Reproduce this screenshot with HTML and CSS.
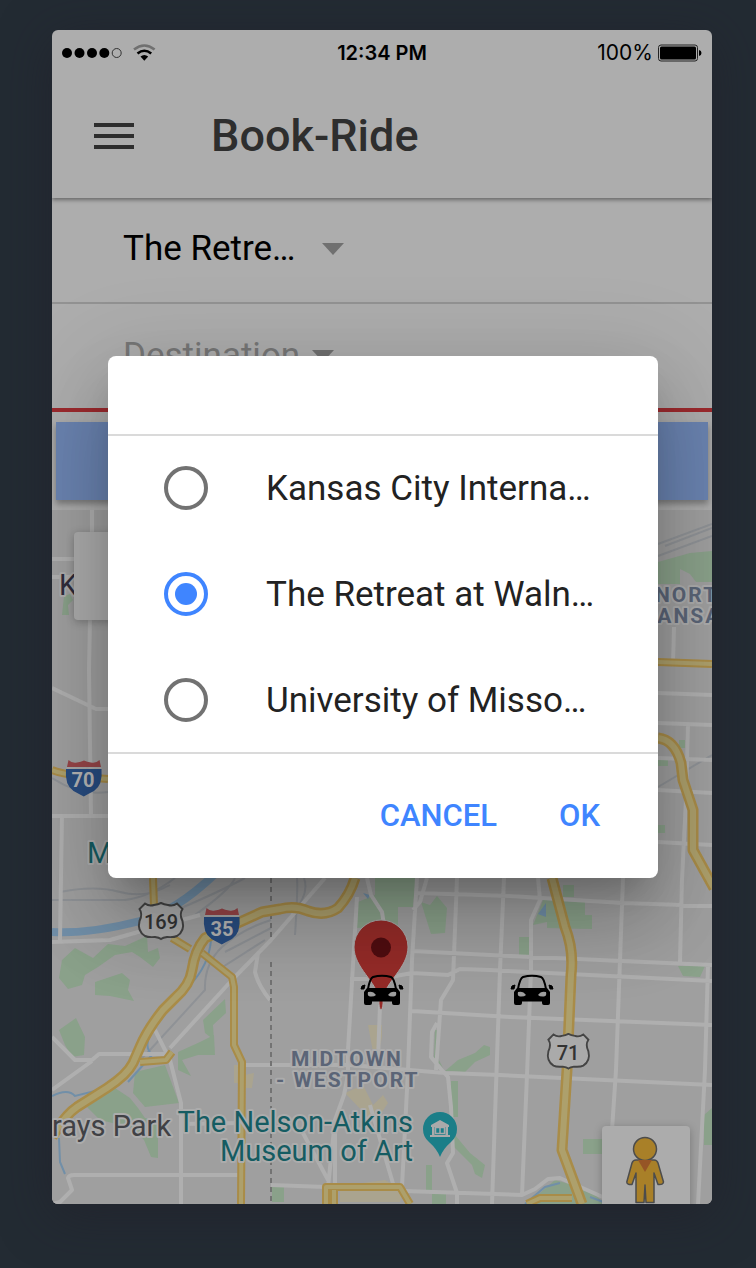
FILE: index.html
```html
<!DOCTYPE html>
<html lang="en">
<head>
<meta charset="utf-8">
<meta name="viewport" content="width=device-width, initial-scale=1">
<title>Book-Ride</title>
<link rel="stylesheet" href="styles.css">
</head>
<body>
<main class="phone">
  <div class="status">
    <div class="status-left">
      <svg width="96" height="20" viewBox="0 0 96 20" aria-label="Signal and Wi-Fi">
        <circle cx="5" cy="10" r="5"/><circle cx="17.500" cy="10" r="5"/><circle cx="30" cy="10" r="5"/><circle cx="42.300" cy="10" r="5"/>
        <circle cx="54.700" cy="10" r="4.500" fill="none" stroke="#333"/>
        <g fill="none" stroke-width="2.600"><path d="M72 6.500Q82.300-1.500 92.600 6.500" stroke="#707070"/><path d="M75.500 10.500Q82.300 5 89.200 10.500" stroke="#000"/></g>
        <path d="M78.500 13.500Q82.300 10.500 86.200 13.500L82.300 17.700z"/>
      </svg>
    </div>
    <span class="clock">12:34 PM</span>
    <div class="status-right">
      <span>100%</span>
      <svg width="44" height="18" viewBox="0 0 44 18" aria-label="Battery full"><rect x=".500" y="1" width="39" height="16" rx="2.500" fill="none" stroke="#222"/><rect x="2" y="2.500" width="36" height="13" rx="1.500"/><path d="M41 6q2.500 .5 2.500 3t-2.500 3z"/></svg>
    </div>
  </div>
  <header class="bar">
    <button class="menu" type="button" aria-label="Menu"><svg width="40" height="28" viewBox="0 0 40 28"><path d="M0 1h40v4H0zM0 12h40v4H0zM0 23h40v4H0z"/></svg></button>
    <h1>Book-Ride</h1>
  </header>
  <form class="trip">
    <div class="field">
      <select class="from" aria-label="Pickup"><option>The Retre…</option></select>
      <svg class="caret" width="22" height="12" viewBox="0 0 22 12"><path d="M0 0h22L11 12z"/></svg>
    </div>
    <div class="field field-to">
      <select class="to" aria-label="Destination"><option>Destination</option></select>
      <svg class="caret" width="22" height="12" viewBox="0 0 22 12"><path d="M0 0h22L11 12z"/></svg>
    </div>
    <button class="book" type="button" aria-label="Book"></button>
  </form>
  <section class="map" aria-label="Map">
    <svg class="map-art" viewBox="52 510 660 694">
      <defs>
        <g id="car">
          <path d="M7 14Q9 3 12 2Q21-.5 30 2Q33 3 35 14" fill="none" stroke="#000" stroke-width="2"/>
          <path d="M6 13H36L39 17V28Q39 30 37 30H33Q31 30 31 28V26.500H11V28Q11 30 9 30H5Q3 30 3 28V17z"/>
          <path d="M0 14Q0 10 4 10L3 14zM42 14Q42 10 38 10L39 14z" stroke="#000"/>
          <path d="M7 17Q12 15.500 15 20Q13 22 9 21.500Q6 21 7 17zM35 17Q30 15.500 27 20Q29 22 33 21.500Q36 21 35 17z" fill="#a0a0a0"/>
        </g>
        <g id="interstate"><path d="M0 9H35.500Q37 25 28 31Q22 34 17.800 36.500Q13 34 7.500 31Q-1.500 25 0 9z" fill="#284c80"/><path d="M2.500 0Q6 3.500 11 2.500Q15 2 18 .5Q21 2 25 2.500Q30 3.500 33.500 0L35 7H1z" fill="#964548"/><path d="M.5 8H35.300" stroke="#aaa" stroke-width="1.500"/></g>
        <path id="us" d="M7 1.500Q11 4.500 16 3Q20 2.500 23 1Q26 2.500 30 3Q35 4.500 39 1.500L44.500 7Q41 12 44.500 19Q47 29 39 34Q36 35.500 29 35Q25 35.500 23 37Q21 35.500 17 35Q10 35.500 7 34Q-1 29 1.500 19Q5 12 1.500 7z" fill="#aaa" stroke="#444" stroke-width="2"/>
      </defs>
      <rect x="52" y="510" width="660" height="694" fill="#9f9f9f"/>
      <g class="park">
        <path d="M62 615L64 596 70 594 73 600 68 605 69 615zM658 562L690 553 712 551V582H696L690 574 680 569V584H658zM679 740h6v8h-6zM658 760h10v6h-10zM658 825h7v8h-7z"/>
        <path d="M62 960L75 948 93 958 108 944 125 946 147 936 148 952 158 948 160 958 153 967 140 957 132 952 115 955 98 967 85 975 82 985 68 989 59 978zM95 982L113 976 122 973 130 980 128 990 134 1001 110 996 95 995zM59 1030L76 1018 85 1037 84 1055 72 1057 65 1045zM203 1020L225 999 226 1013 213 1025 214 1040 205 1033zM178 1052L200 1042 214 1035 215 1055 198 1055 182 1060 191 1076 178 1070z"/>
        <path d="M135 1072L165 1065 179 1103 145 1107 133 1093zM87 1107L115 1088 130 1098 138 1108 145 1118 158 1120V1158L151 1157 144 1140 133 1128 100 1120zM375 878H416L413 907H398V925L357 928 358 902 375 895zM421 902L430 905 437 896 447 908 445 933 431 934 425 915zM563 885h11v12h-11zM543 900L585 902V915H592V929L547 928V922L533 925zM519 937h10v18h-10zM678 966H705L700 977 683 976z"/>
        <path d="M435 1030h3v28l5 10-9-10zM445 1071L458 1060 475 1053 484 1045 490 1047V1055L475 1062 465 1072zM451 1081h7v36h-7zM455 1135L470 1153 485 1165 482 1178 475 1174 472 1165 452 1145zM426 1165h6v25h-6zM432 1194h14v10h-14zM583 1139h20v15h-20zM704 1115l8-7v37h-8zM272 1187h12v15h-12zM527 1204L555 1180 573 1185 590 1190 605 1204z"/>
      </g>
      <path class="tan" d="M234 1065h8v18h-8zM244 1075l10-2-2 15h-8zM368 1025h14v12l-3 15h-6zM345 1093l18-8 10 20 10-10 5 8-8 12-12 2zM340 1186l45-6 18 10-3 12h-60z"/>
      <g class="rail"><path d="M52 778Q80 796 108 792M52 900H125Q150 897 175 878M60 892Q95 885 120 892T170 885M140 925Q210 897 245 878M195 915Q230 890 235 878M658 544L712 524M658 556L712 536M665 546L712 528M658 787L712 755M271 920Q240 930 222 947T205 990L150 1050 118 1082M271 928L225 952M265 940L218 970M304 878Q310 895 292 913M297 878Q298 890 295 935"/></g>
      <path class="river" d="M52 932Q90 934 140 921Q175 912 215 874"/>
      <path class="stream" d="M211 940Q209 965 190 985M150 1035Q144 1047 152 1055L128 1082M52 1096Q68 1088 75 1096L95 1091M59 1138L60 1162 65 1174M525 1204L545 1187 560 1183M590 1197L606 1203"/>
      <path class="water" d="M538 914L546 903 546 917zM363 893l7 2-2 4z"/>
      <g class="road">
        <path d="M92 510V534M90 620L89 670 91 815M52 559H74M52 577H74M52 688L96 709H108M52 816H108M62 816L60 940M52 942L110 940 145 930 200 915M325 878L271 940 232 980 170 1048M258 953L255 972Q258 985 270 1000M155 1030L170 1060 181 1103V1204M52 1037L75 1060H92L99 1054H170M92 1061L52 1090M52 1204L60 1202 72 1190 68 1178Q69 1175 74 1175H240M181 1124L240 1123M245 1065H350L445 1073 500 1075 712 1085"/>
        <path d="M357 897L348 1050V1075L344 1095 335 1120 328 1187M335 1133V1187M303 1133L328 1180M271 1185L326 1187M370 1105L394 1187M367 878L371 895 382 912 384 925M417 878L412 960 408 1070 402 1187M427 878L420 902 413 910M417 893L510 896 623 903 712 906M412 951L510 956 712 965M350 979H380L412 973 448 975 460 969 490 970 712 981M412 1011L510 1017 712 1025M457 878L453 980 441 1000 436 1070M437 1023L432 1032 431 1057 440 1068 448 1077 451 1107 453 1153 447 1163 457 1193V1204M504 878L500 970 492 1204M538 878L540 900 531 920 531 970 527 1075 522 1195M623 878L616 1070 612 1130M682 878L680 962M708 965L705 1070 698 1204M380 1005L378 1060M404 1191L522 1195 535 1189 548 1179 560 1178 605 1198"/>
        <path d="M674 627L673 662M658 693L712 695M658 723L712 725M658 758L712 760M658 790L712 793M658 842L712 845M688 725L686 800 682 880"/>
      </g>
      <path class="border" d="M271 878V940M271 962V1204"/>
      <g class="highway">
        <path d="M52 770Q68 776 108 779M153 878L154 906M172 938L190 949M202 953L232 977 234 987V1045L242 1062 241 1204M658 662L712 664M140 1062L166 1060 172 1052M326 1204V1187H400L410 1204M334 1204V1190M527 1204L540 1198H572"/>
        <path class="main" d="M355 878Q350 895 338 908Q325 917 308 911Q295 905 280 909L262 912 240 922 205 938Q195 950 192 970Q190 985 175 998L163 1010Q147 1030 140 1047L133 1063Q127 1075 107 1088L77 1107Q65 1115 52 1137M552 878L565 927Q574 950 571 975L567 1070 562 1150 582 1204M658 738Q675 740 681 763L683 780 693 810V850L714 888"/>
      </g>
      <g class="highway-fill">
        <path d="M52 770Q68 776 108 779M153 878L154 906M172 938L190 949M202 953L232 977 234 987V1045L242 1062 241 1204M658 662L712 664M140 1062L166 1060 172 1052M326 1204V1187H400L410 1204M334 1204V1190M527 1204L540 1198H572"/>
        <path class="main" d="M355 878Q350 895 338 908Q325 917 308 911Q295 905 280 909L262 912 240 922 205 938Q195 950 192 970Q190 985 175 998L163 1010Q147 1030 140 1047L133 1063Q127 1075 107 1088L77 1107Q65 1115 52 1137M552 878L565 927Q574 950 571 975L567 1070 562 1150 582 1204M658 738Q675 740 681 763L683 780 693 810V850L714 888"/>
      </g>
      <use href="#interstate" x="66" y="760"/><text class="shield light" x="83" y="787">70</text>
      <use href="#interstate" x="204" y="908"/><text class="shield light" x="222" y="936">35</text>
      <use href="#us" x="138" y="902"/><text class="shield" x="161" y="929">169</text>
      <use href="#us" transform="translate(547 1033) scale(.93 .96)"/><text class="shield" x="568" y="1060">71</text>
      <text class="place dark" x="59" y="595">K</text>
      <text class="place teal" x="87" y="863">Museum</text>
      <text class="area" x="655" y="602">NORTH</text><text class="area" x="642" y="623">KANSAS</text>
      <text class="area" x="291" y="1066">MIDTOWN</text><text class="area" x="276" y="1087">- WESTPORT</text>
      <text class="place park-name" x="52" y="1136">rays Park</text>
      <text class="place teal end" x="413" y="1132">The Nelson-Atkins</text><text class="place teal end" x="413" y="1161">Museum of Art</text>
      <path d="M440 1157Q437 1149 429 1142Q423 1137 423 1129A17 17 0 0 1 457 1129Q457 1137 451 1142Q443 1149 440 1157z" fill="#1b7e88"/>
      <path d="M440 1120l-9 5v2h18v-2zM432 1127h2.500v8H432zM445.500 1127h2.500v8h-2.500zM430 1135h20v2h-20z" fill="#aaa"/><path d="M435.500 1127.500h9v6h-9zM440 1127.500v6" fill="none" stroke="#aaa" stroke-width="1.500"/>
      <path d="M381 1010Q378.500 1008 379 999C377 982 354 968 354 947A27 27 0 0 1 408 947C408 968 385 982 383 999Q383.500 1008 381 1010z" fill="#952b28" stroke="#aaa"/>
      <circle cx="381" cy="947.500" r="10" fill="#500d10"/>
      <use href="#car" x="361" y="975"/><use href="#car" x="511" y="975"/>
    </svg>
    <button class="map-control map-type" type="button" aria-label="Map type"></button>
    <button class="map-control pegman" type="button" aria-label="Street View">
      <svg width="40" height="68" viewBox="0 0 40 68"><g fill="#a98028" stroke="#4c4c4c" stroke-width="1.500" stroke-linejoin="round"><path d="M10 24H28Q31 24 32 27L37.500 46Q37 49 32 48.500L28 37V66.500H20L19 49 18 66.500H10V37L6 48.500Q1 49 .8 46L6 27Q7 24 10 24z"/><circle cx="19" cy="13" r="11.500"/></g><path d="M12 24H26L19 36z" fill="#965526"/></svg>
    </button>
  </section>
  <div class="overlay">
    <div class="dialog" role="dialog" aria-modal="true" aria-label="Choose pickup">
      <div class="options">
        <label class="option"><input type="radio" name="place"><span>Kansas City Interna…</span></label>
        <label class="option"><input type="radio" name="place" checked><span>The Retreat at Waln…</span></label>
        <label class="option"><input type="radio" name="place"><span>University of Misso…</span></label>
      </div>
      <div class="actions"><button type="button">CANCEL</button><button type="button">OK</button></div>
    </div>
  </div>
</main>
</body>
</html>
```
FILE: styles.css
```css
* { box-sizing: border-box; }
body {
  margin: 0;
  padding: 30px 44px 64px 52px;
  background: #232b33;
  font-family: Roboto, "Liberation Sans", sans-serif;
  color: #000;
}
button { border: 0; padding: 0; background: none; font: inherit; color: inherit; }
svg { display: block; }

.phone {
  position: relative;
  overflow: hidden;
  border-radius: 6px;
  background: #adadad;
  box-shadow: 0 10px 50px rgba(34, 32, 42, 0.6);
}

.status {
  display: grid;
  grid-template-columns: 1fr auto 1fr;
  align-items: center;
  height: 46px;
  padding: 0 10px;
  font: 400 21px/24px Inter, Roboto, sans-serif;
}
.clock { font-weight: 600; font-size: 20px; }
.status-right { display: flex; justify-content: flex-end; align-items: center; gap: 5px; }

.bar {
  display: flex;
  align-items: center;
  gap: 77px;
  height: 122px;
  padding: 0 42px 2px;
  box-shadow: 0 2px 4px rgba(0, 0, 0, 0.4);
  clip-path: inset(0 0 -10px 0);
}
.menu svg { fill: #2e2e2e; }
.bar h1 { margin: 0; font-size: 45px; line-height: 52px; font-weight: 500; color: #2e2e2e; }

.field {
  display: flex;
  align-items: center;
  height: 106px;
  padding: 0 71px 2px;
  border-bottom: 2px solid #929292;
}
.field-to { height: 108px; padding-bottom: 0; border-bottom: 4px solid #9c2a2e; }
.field select {
  appearance: none;
  border: 0;
  padding: 0;
  background: none;
  font: 400 35px/48px Roboto, sans-serif;
  color: #000;
  opacity: 1;
}
.field .from { width: 199px; }
.field .to { width: 189px; color: #777; }
.caret { fill: #707070; }

.book {
  display: block;
  width: calc(100% - 8px);
  height: 78px;
  margin: 10px 4px;
  background: #6a83b0;
  box-shadow: 0 4px 6px rgba(0, 0, 0, 0.3);
}

.map { position: relative; overflow: hidden; }
.map-art { width: 100%; height: auto; }
.park { fill: #8aa18a; }
.tan { fill: #aaa48f; }
.rail { fill: none; stroke: #8f9296; stroke-width: 2; }
.river { fill: none; stroke: #718fa8; stroke-width: 8; }
.stream { fill: none; stroke: #718fa8; stroke-width: 2; }
.water { fill: #718fa8; }
.road { fill: none; stroke: #afafaf; stroke-width: 4; stroke-linejoin: round; }
.border { fill: none; stroke: #737373; stroke-width: 2; stroke-dasharray: 5 4; }
.highway { fill: none; stroke: #a98c48; stroke-width: 8; stroke-linejoin: round; }
.highway .main { stroke-width: 11; }
.highway-fill { fill: none; stroke: #ada06c; stroke-width: 4; stroke-linejoin: round; }
.highway-fill .main { stroke-width: 6; }
.shield { font: 500 20px Roboto, sans-serif; text-anchor: middle; fill: #333; }
.light { fill: #b5b5b5; font-weight: 700; }
.place, .area { paint-order: stroke; stroke: #acacac; stroke-width: 4px; stroke-linejoin: round; }
.place { font: 400 29px Roboto, sans-serif; }
.dark { fill: #302d3c; }
.park-name { fill: #404145; }
.teal { fill: #155c62; }
.end { text-anchor: end; }
.area { font: 700 21px Roboto, sans-serif; letter-spacing: 2px; fill: #5b6577; }

.map-control {
  position: absolute;
  width: 88px;
  height: 88px;
  border-radius: 4px;
  background: #acacac;
  box-shadow: 0 2px 8px rgba(0, 0, 0, 0.25);
}
.map-type { top: 22px; left: 22px; }
.pegman { right: 22px; bottom: -10px; display: grid; place-items: center; }

.overlay {
  position: absolute;
  inset: 0;
  display: flex;
  align-items: center;
  padding: 0 54px 0 56px;
}
.dialog {
  flex: 1;
  min-width: 0;
  padding-top: 78px;
  border-radius: 8px;
  background: #fff;
  box-shadow: 0 22px 30px -14px rgba(0, 0, 0, 0.2), 0 48px 76px 6px rgba(0, 0, 0, 0.14), 0 18px 92px 16px rgba(0, 0, 0, 0.12);
}
.options {
  display: grid;
  gap: 2px;
  border-top: 2px solid #dadada;
  border-bottom: 2px solid #dadada;
}
.option {
  display: flex;
  align-items: center;
  gap: 58px;
  height: 104px;
  padding: 0 56px;
  font-size: 35px;
  line-height: 48px;
  color: #222;
  white-space: nowrap;
}
.option span { padding-top: 2px; }
.option input {
  appearance: none;
  flex: none;
  display: grid;
  place-items: center;
  width: 44px;
  height: 44px;
  margin: 0;
  border: 4px solid #727272;
  border-radius: 50%;
}
.option input:checked { border-color: #3f85ff; }
.option input:checked::before {
  content: "";
  width: 22px;
  height: 22px;
  border-radius: 50%;
  background: #3f85ff;
}
.actions {
  display: flex;
  justify-content: flex-end;
  align-items: center;
  gap: 62px;
  height: 124px;
  padding: 0 58px;
  font-size: 31px;
  line-height: 40px;
  font-weight: 500;
  color: #3f85ff;
}
```
